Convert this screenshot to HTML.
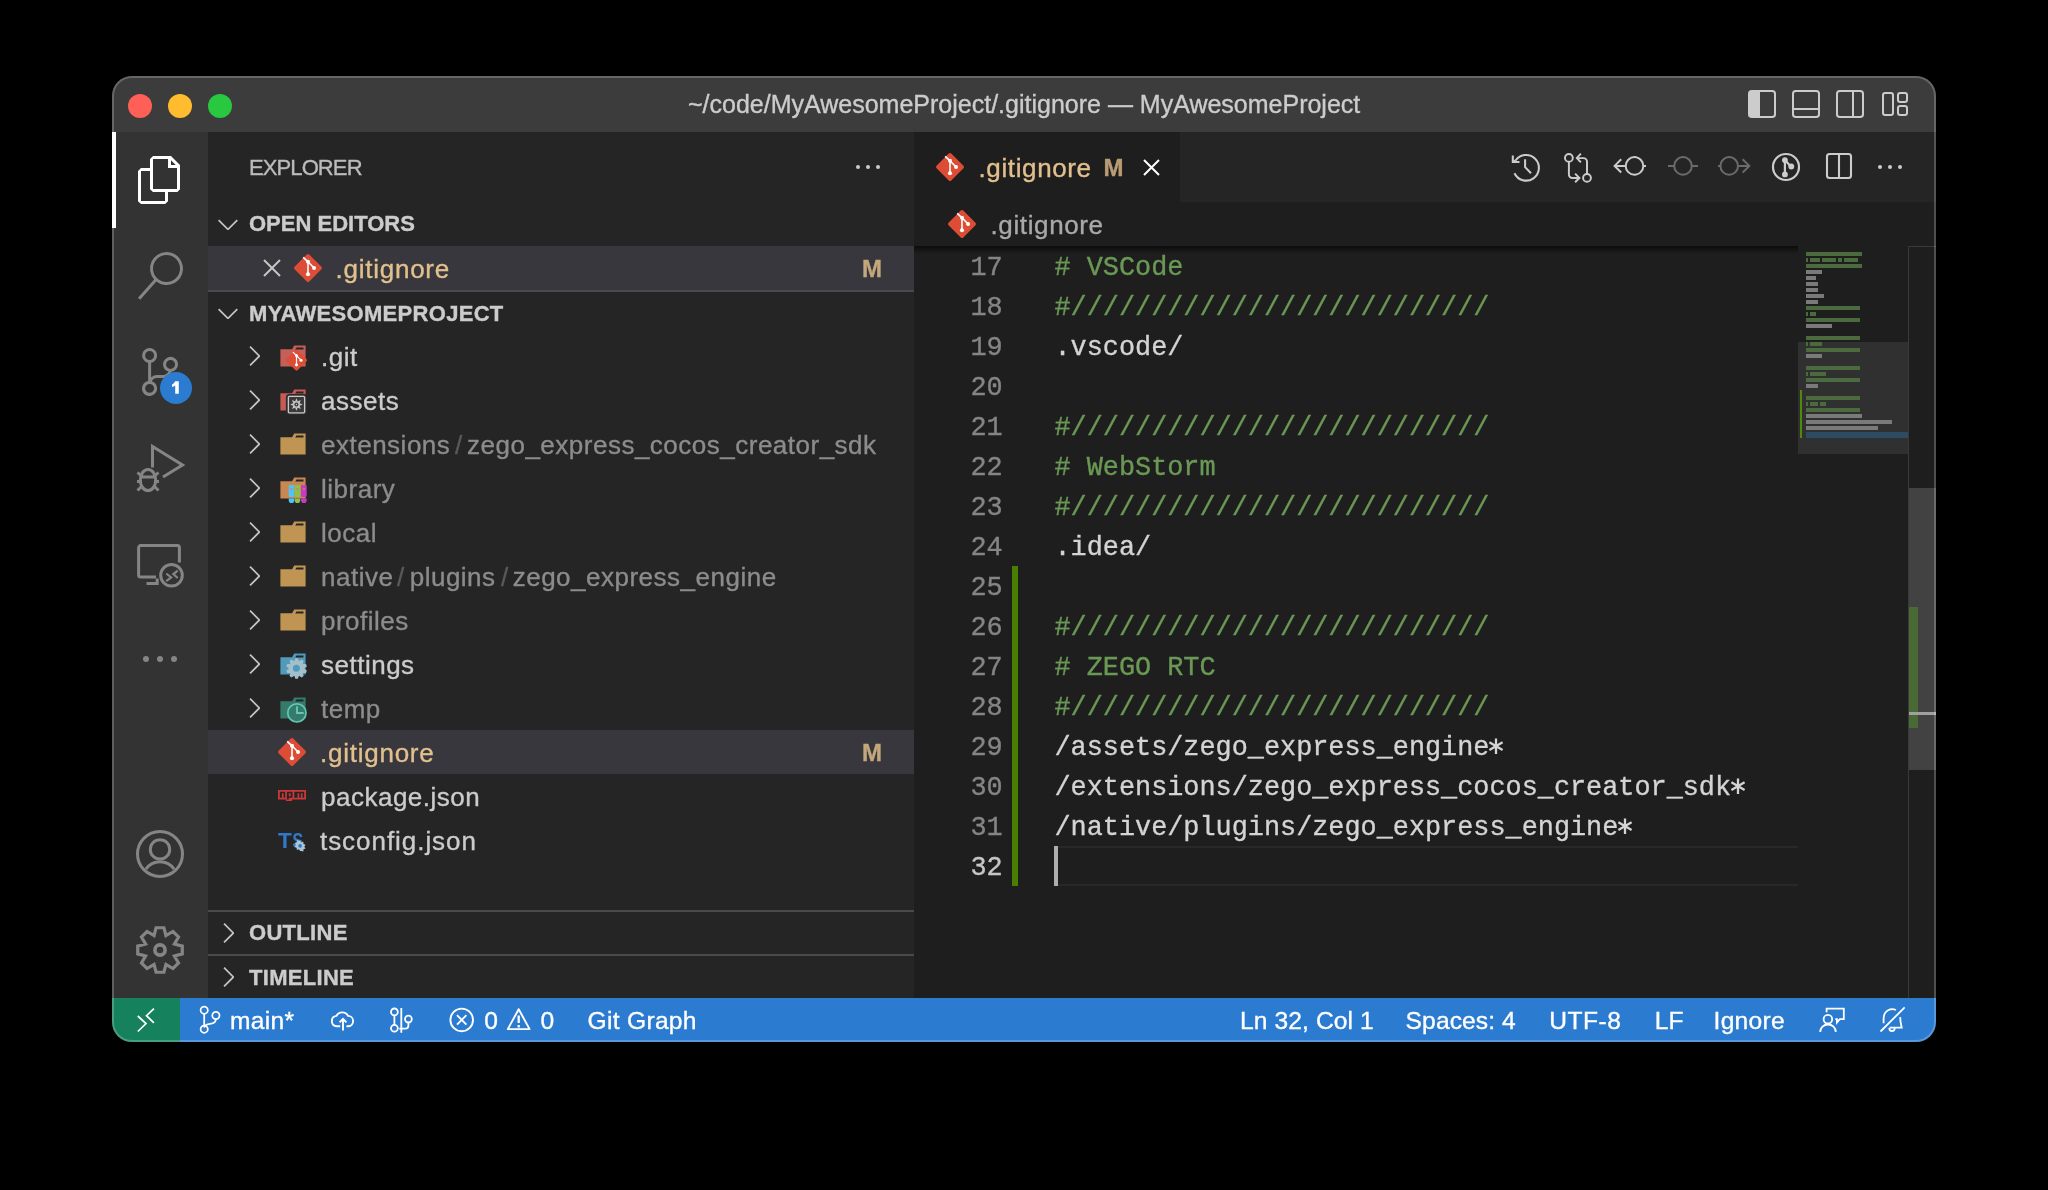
<!DOCTYPE html>
<html><head><meta charset="utf-8">
<style>
*{margin:0;padding:0;box-sizing:border-box}
html,body{width:2048px;height:1190px;background:#000;overflow:hidden;font-family:"Liberation Sans",sans-serif}
#win{position:absolute;left:0;top:0;width:2048px;height:1190px;clip-path:inset(76px 112px 148px 112px round 20px);will-change:transform}
.a{position:absolute}
.t{position:absolute;white-space:pre;line-height:1;-webkit-text-stroke:0.35px currentColor}
.mono{font-family:"Liberation Mono",monospace}
svg{position:absolute;overflow:visible}
</style></head><body>
<div id="win">
<div class="a" style="left:112px;top:76px;width:1824px;height:56px;background:#3c3c3c;"></div>
<div class="a" style="left:112px;top:132px;width:96px;height:866px;background:#333333;"></div>
<div class="a" style="left:208px;top:132px;width:706px;height:866px;background:#252526;"></div>
<div class="a" style="left:914px;top:132px;width:1022px;height:866px;background:#1e1e1e;"></div>
<div class="a" style="left:1180px;top:132px;width:756px;height:70px;background:#252526;"></div>
<div class="a" style="left:112px;top:998px;width:1824px;height:44px;background:#2b7bd1;"></div>
<div class="a" style="left:112px;top:998px;width:68px;height:44px;background:#16825d;"></div>
<div class="a" style="left:128px;top:94px;width:24px;height:24px;border-radius:50%;background:#fe5f57"></div>
<div class="a" style="left:168px;top:94px;width:24px;height:24px;border-radius:50%;background:#febc2e"></div>
<div class="a" style="left:208px;top:94px;width:24px;height:24px;border-radius:50%;background:#28c840"></div>
<div class="t" style="left:688px;top:92.34px;font-size:25px;color:#cccccc;">~/code/MyAwesomeProject/.gitignore — MyAwesomeProject</div>
<svg style="left:1748px;top:90px;" width="28" height="28" viewBox="0 0 28 28"><rect x="1" y="1" width="26" height="26" rx="2.8" fill="none" stroke="#cccccc" stroke-width="2"/><path d="M3.8 1h8.2v26H3.8a2.8 2.8 0 0 1-2.8-2.8V3.8A2.8 2.8 0 0 1 3.8 1z" fill="#cccccc"/></svg>
<svg style="left:1792px;top:90px;" width="28" height="28" viewBox="0 0 28 28"><rect x="1" y="1" width="26" height="26" rx="2.8" fill="none" stroke="#cccccc" stroke-width="2"/><path d="M1 19h26" stroke="#cccccc" stroke-width="2"/></svg>
<svg style="left:1836px;top:90px;" width="28" height="28" viewBox="0 0 28 28"><rect x="1" y="1" width="26" height="26" rx="2.8" fill="none" stroke="#cccccc" stroke-width="2"/><path d="M17 1v26" stroke="#cccccc" stroke-width="2"/></svg>
<svg style="left:1882px;top:92px;" width="26" height="24" viewBox="0 0 26 24"><rect x="1" y="1" width="10" height="22" rx="2.2" fill="none" stroke="#cccccc" stroke-width="2"/><rect x="16" y="1" width="9" height="9" rx="2.2" fill="none" stroke="#cccccc" stroke-width="2"/><rect x="16" y="14" width="9" height="9" rx="2.2" fill="none" stroke="#cccccc" stroke-width="2"/></svg>
<div class="a" style="left:112px;top:132px;width:4px;height:96px;background:#ffffff;"></div>
<svg style="left:136px;top:156px;" width="48" height="48" viewBox="0 0 24 24"><path fill="#ffffff" fill-rule="evenodd" d="M17.5 0h-9L7 1.5V6H2.5L1 7.5v15.07L2.5 24h12.07L16 22.57V18h4.7l1.3-1.43V4.5L17.5 0zm0 2.12l2.38 2.38H17.5V2.12zm-3 20.38h-12v-15H7v9.07L8.5 18h6v4.5zm6-6h-12v-15H16V6h4.5v10.5z"/></svg>
<svg style="left:136px;top:252px;" width="48" height="48" viewBox="0 0 24 24"><path fill="#858585" d="M15.25 0a8.25 8.25 0 0 0-6.18 13.72L1 22.88l1.12 1l8.05-9.12A8.25 8.25 0 1 0 15.25.01V0zm0 15a6.75 6.75 0 1 1 0-13.5 6.75 6.75 0 0 1 0 13.5z"/></svg>
<svg style="left:136px;top:348px;" width="48" height="48" viewBox="0 0 24 24"><path fill="#858585" d="M21.007 8.222A3.738 3.738 0 0 0 15.045 5.2a3.737 3.737 0 0 0 1.156 6.583 2.988 2.988 0 0 1-2.668 1.67h-2.99a4.456 4.456 0 0 0-2.989 1.165V7.4a3.737 3.737 0 1 0-1.494 0v9.117a3.776 3.776 0 1 0 1.816.099 2.99 2.99 0 0 1 2.668-1.667h2.99a4.484 4.484 0 0 0 4.223-3.039 3.736 3.736 0 0 0 3.25-3.687zM4.565 3.738a2.242 2.242 0 1 1 4.484 0 2.242 2.242 0 0 1-4.484 0zm4.484 16.441a2.242 2.242 0 1 1-4.484 0 2.242 2.242 0 0 1 4.484 0zm8.221-9.715a2.242 2.242 0 1 1 0-4.485 2.242 2.242 0 0 1 0 4.485z"/></svg>
<div class="a" style="left:159.7px;top:372px;width:32px;height:32px;border-radius:50%;background:#2b7bd1"></div>
<svg style="left:168px;top:378px;" width="16" height="18" viewBox="0 0 16 18"><path fill="#ffffff" d="M7.2 3.2h3.6v12.6H7.2V7.4c-.9.8-2.1 1.4-3.2 1.7V6.6C5.2 6 6.5 4.6 7.2 3.2z"/></svg>
<svg style="left:136px;top:444px;" width="48" height="48" viewBox="0 0 48 48"><g fill="none" stroke="#858585" stroke-width="3"><path d="M16.5 23.5V2.5l30 18.5-19.5 12"/><ellipse cx="12" cy="36" rx="7.7" ry="10.6"/><path d="M5 33h14M1.5 28.5l4.5 4M22.5 28.5l-4.5 4M1 37.5h5M18 37.5h5M1.5 46.5l5-5M22.5 46.5l-5-5"/></g></svg>
<svg style="left:136px;top:540px;" width="48" height="48" viewBox="0 0 48 48"><g fill="none" stroke="#858585" stroke-width="3"><path d="M43.4 22.6V7.6a2 2 0 0 0-2-2H4.6a2 2 0 0 0-2 2v27.4a2 2 0 0 0 2 2h15.4"/><path d="M10.5 43.5H21.2V38.5"/><circle cx="35.5" cy="35.3" r="10.8"/></g><path d="M30.2 33.5l5 3.9-5 3.8M41.7 30.6l-4.4 3.5 4.4 3.9" fill="none" stroke="#858585" stroke-width="2.2"/></svg>
<div class="a" style="left:142.5px;top:655.7px;width:6px;height:6px;border-radius:50%;background:#858585"></div>
<div class="a" style="left:156.8px;top:655.7px;width:6px;height:6px;border-radius:50%;background:#858585"></div>
<div class="a" style="left:171.2px;top:655.7px;width:6px;height:6px;border-radius:50%;background:#858585"></div>
<svg style="left:136px;top:830px;" width="48" height="48" viewBox="0 0 48 48"><g fill="none" stroke="#858585" stroke-width="3"><circle cx="24" cy="24" r="22.5"/><circle cx="24" cy="19.4" r="9.7"/><path d="M9.9 39.2A17.1 17.1 0 0 1 38.1 39.2"/></g></svg>
<svg style="left:136px;top:926px;" width="48" height="48" viewBox="0 0 48 48"><path fill="none" stroke="#858585" stroke-width="3.2" stroke-linejoin="miter" d="M20.08 1.74 L27.92 1.74 L29.97 9.59 L36.96 5.49 L42.51 11.04 L38.41 18.03 L46.26 20.08 L46.26 27.92 L38.41 29.97 L42.51 36.96 L36.96 42.51 L29.97 38.41 L27.92 46.26 L20.08 46.26 L18.03 38.41 L11.04 42.51 L5.49 36.96 L9.59 29.97 L1.74 27.92 L1.74 20.08 L9.59 18.03 L5.49 11.04 L11.04 5.49 L18.03 9.59Z"/><circle cx="24" cy="24" r="5.1" fill="none" stroke="#858585" stroke-width="3.6"/></svg>
<div class="t" style="left:249px;top:156.68px;font-size:22px;color:#bbbbbb;letter-spacing:-0.9px;">EXPLORER</div>
<div class="a" style="left:855.5px;top:164.5px;width:4.8px;height:4.8px;border-radius:50%;background:#cccccc"></div>
<div class="a" style="left:865.5px;top:164.5px;width:4.8px;height:4.8px;border-radius:50%;background:#cccccc"></div>
<div class="a" style="left:875.6px;top:164.5px;width:4.8px;height:4.8px;border-radius:50%;background:#cccccc"></div>
<svg style="left:212px;top:208px;" width="32" height="32" viewBox="0 0 16 16"><path fill="#c5c5c5" d="M7.976 10.072l4.357-4.357.62.618L8.284 11h-.618L3 6.333l.619-.618 4.357 4.357z"/></svg>
<div class="t" style="left:249px;top:213.38px;font-size:22px;color:#cccccc;font-weight:700;">OPEN EDITORS</div>
<div class="a" style="left:208px;top:246px;width:706px;height:44px;background:#37373d;"></div>
<svg style="left:263px;top:259px;" width="18" height="18" viewBox="0 0 18 18"><path d="M1 1l16 16M17 1L1 17" stroke="#c5c5c5" stroke-width="2" fill="none"/></svg>
<svg style="left:292px;top:252px;" width="32" height="32" viewBox="0 0 32 32"><path fill="#dd4c35" d="M29.472 14.753L17.247 2.528a1.8 1.8 0 0 0-2.55 0L2.528 14.697a1.8 1.8 0 0 0 0 2.551l12.225 12.224a1.8 1.8 0 0 0 2.55 0l12.169-12.17a1.8 1.8 0 0 0 0-2.549"/><path fill="none" stroke="#fff" stroke-width="1.6" d="M11.2 5.3l4.8 4.5v12.4M16 9.8l6.05 6.2"/><circle cx="16" cy="9.8" r="2" fill="#fff"/><circle cx="22.05" cy="16" r="2" fill="#fff"/><circle cx="16" cy="22.2" r="2.05" fill="#fff"/></svg>
<div class="t" style="left:335.5px;top:255.99px;font-size:26px;color:#e2c08d;letter-spacing:0.75px;">.gitignore</div>
<div class="t" style="left:862px;top:256.88px;font-size:24px;color:#c4a77c;font-weight:700;letter-spacing:-1.5px;">M</div>
<div class="a" style="left:208px;top:290px;width:706px;height:2px;background:#4a4a4b;"></div>
<svg style="left:212px;top:297px;" width="32" height="32" viewBox="0 0 16 16"><path fill="#c5c5c5" d="M7.976 10.072l4.357-4.357.62.618L8.284 11h-.618L3 6.333l.619-.618 4.357 4.357z"/></svg>
<div class="t" style="left:249px;top:302.58px;font-size:22px;color:#cccccc;font-weight:700;letter-spacing:0.3px;">MYAWESOMEPROJECT</div>
<svg style="left:238px;top:340px;" width="32" height="32" viewBox="0 0 16 16"><path fill="#c5c5c5" d="M10.072 8.024L5.715 3.667l.618-.62L11 7.716v.618L6.333 13l-.618-.619 4.357-4.357z"/></svg>
<svg style="left:276px;top:340px;" width="32" height="32" viewBox="0 0 32 32"><path fill="#c55f58" d="M27.5 5.5h-9.3l-2.1 3.8H4.4v17.2h25.2V5.5zm0 4.1h-8.2l1.1-2.1h7.1z"/><g transform="translate(8.5 8.2) scale(0.75)"><path fill="#dd4c35" d="M29.472 14.753L17.247 2.528a1.8 1.8 0 0 0-2.55 0L2.528 14.697a1.8 1.8 0 0 0 0 2.551l12.225 12.224a1.8 1.8 0 0 0 2.55 0l12.169-12.17a1.8 1.8 0 0 0 0-2.549"/><path fill="none" stroke="#fff" stroke-width="1.6" d="M11.2 5.3l4.8 4.5v12.4M16 9.8l6.05 6.2"/><circle cx="16" cy="9.8" r="2" fill="#fff"/><circle cx="22.05" cy="16" r="2" fill="#fff"/><circle cx="16" cy="22.2" r="2.05" fill="#fff"/></g></svg>
<div class="t" style="left:321px;top:344.39px;font-size:26px;color:#cccccc;letter-spacing:0.5px;">.git</div>
<svg style="left:238px;top:384px;" width="32" height="32" viewBox="0 0 16 16"><path fill="#c5c5c5" d="M10.072 8.024L5.715 3.667l.618-.62L11 7.716v.618L6.333 13l-.618-.619 4.357-4.357z"/></svg>
<svg style="left:276px;top:384px;" width="32" height="32" viewBox="0 0 32 32"><path fill="#c55a56" d="M27.5 5.5h-9.3l-2.1 3.8H4.4v17.2h25.2V5.5zm0 4.1h-8.2l1.1-2.1h7.1z"/><rect x="10.4" y="10.5" width="20.2" height="20.1" rx="2.5" fill="#3a3a3a" stroke="#2a2a2a" stroke-width="1"/><rect x="12.4" y="12.4" width="16.2" height="16.4" rx="1" fill="none" stroke="#c8c8c8" stroke-width="1.3"/><path fill="#c8c8c8" d="M20.40 14.30L19.01 17.62L21.79 17.62ZM24.78 16.12L21.45 17.48L23.42 19.45ZM26.60 20.50L23.28 19.11L23.28 21.89ZM24.78 24.88L23.42 21.55L21.45 23.52ZM20.40 26.70L21.79 23.38L19.01 23.38ZM16.02 24.88L19.35 23.52L17.38 21.55ZM14.20 20.50L17.52 21.89L17.52 19.11ZM16.02 16.12L17.38 19.45L19.35 17.48Z"/><circle cx="20.4" cy="20.5" r="3.3" fill="#c8c8c8"/><circle cx="20.4" cy="20.5" r="2" fill="#3a3a3a"/><circle cx="20.4" cy="20.5" r="0.7" fill="#c8c8c8"/></svg>
<div class="t" style="left:321px;top:388.39px;font-size:26px;color:#cccccc;letter-spacing:0.5px;">assets</div>
<svg style="left:238px;top:428px;" width="32" height="32" viewBox="0 0 16 16"><path fill="#c5c5c5" d="M10.072 8.024L5.715 3.667l.618-.62L11 7.716v.618L6.333 13l-.618-.619 4.357-4.357z"/></svg>
<svg style="left:276px;top:428px;" width="32" height="32" viewBox="0 0 32 32"><path fill="#c09553" d="M27.5 5.5h-9.3l-2.1 3.8H4.4v17.2h25.2V5.5zm0 4.1h-8.2l1.1-2.1h7.1z"/></svg>
<div class="t" style="left:321px;top:432.39px;font-size:26px;color:#8c8c8c;letter-spacing:0.5px;">extensions</div>
<div class="t" style="left:455px;top:432.39px;font-size:26px;color:#5a5a5a;">/</div>
<div class="t" style="left:467px;top:432.39px;font-size:26px;color:#8c8c8c;letter-spacing:0.5px;">zego_express_cocos_creator_sdk</div>
<svg style="left:238px;top:472px;" width="32" height="32" viewBox="0 0 16 16"><path fill="#c5c5c5" d="M10.072 8.024L5.715 3.667l.618-.62L11 7.716v.618L6.333 13l-.618-.619 4.357-4.357z"/></svg>
<svg style="left:276px;top:472px;" width="32" height="32" viewBox="0 0 32 32"><path fill="#c98752" d="M27.5 5.5h-9.3l-2.1 3.8H4.4v17.2h25.2V5.5zm0 4.1h-8.2l1.1-2.1h7.1z"/><path fill="#4fc3f7" d="M12.7 13.6l.8-.6h1.2l.8.6l.8-.6h1.2l.8.6v10.6l-.9 .7h-3.8l-.9-.7z"/><path fill="#4fc3f7" d="M12.7 26.4h5.6v2.6l-1.2 2h-3.2l-1.2-2z"/><rect x="14.4" y="16.2" width="2.2" height="1.6" fill="#c98752"/><path fill="#8bc34a" d="M18.65 13.6l.8-.6h1.2l.8.6l.8-.6h1.2l.8.6v10.6l-.9 .7h-3.8l-.9-.7z"/><path fill="#8bc34a" d="M18.65 26.4h5.6v2.6l-1.2 2h-3.2l-1.2-2z"/><rect x="20.349999999999998" y="16.2" width="2.2" height="1.6" fill="#c98752"/><path fill="#c63ac6" d="M25.05 13.6l.8-.6h1.2l.8.6l.8-.6h1.2l.8.6v10.6l-.9 .7h-3.8l-.9-.7z"/><path fill="#c63ac6" d="M25.05 26.4h5.6v2.6l-1.2 2h-3.2l-1.2-2z"/><rect x="26.75" y="16.2" width="2.2" height="1.6" fill="#c98752"/></svg>
<div class="t" style="left:321px;top:476.39px;font-size:26px;color:#8c8c8c;letter-spacing:0.5px;">library</div>
<svg style="left:238px;top:516px;" width="32" height="32" viewBox="0 0 16 16"><path fill="#c5c5c5" d="M10.072 8.024L5.715 3.667l.618-.62L11 7.716v.618L6.333 13l-.618-.619 4.357-4.357z"/></svg>
<svg style="left:276px;top:516px;" width="32" height="32" viewBox="0 0 32 32"><path fill="#c09553" d="M27.5 5.5h-9.3l-2.1 3.8H4.4v17.2h25.2V5.5zm0 4.1h-8.2l1.1-2.1h7.1z"/></svg>
<div class="t" style="left:321px;top:520.39px;font-size:26px;color:#8c8c8c;letter-spacing:0.5px;">local</div>
<svg style="left:238px;top:560px;" width="32" height="32" viewBox="0 0 16 16"><path fill="#c5c5c5" d="M10.072 8.024L5.715 3.667l.618-.62L11 7.716v.618L6.333 13l-.618-.619 4.357-4.357z"/></svg>
<svg style="left:276px;top:560px;" width="32" height="32" viewBox="0 0 32 32"><path fill="#c09553" d="M27.5 5.5h-9.3l-2.1 3.8H4.4v17.2h25.2V5.5zm0 4.1h-8.2l1.1-2.1h7.1z"/></svg>
<div class="t" style="left:321px;top:564.39px;font-size:26px;color:#8c8c8c;letter-spacing:0.5px;">native</div>
<div class="t" style="left:397px;top:564.39px;font-size:26px;color:#5a5a5a;">/</div>
<div class="t" style="left:409.7px;top:564.39px;font-size:26px;color:#8c8c8c;letter-spacing:0.5px;">plugins</div>
<div class="t" style="left:501px;top:564.39px;font-size:26px;color:#5a5a5a;">/</div>
<div class="t" style="left:512.7px;top:564.39px;font-size:26px;color:#8c8c8c;letter-spacing:0.5px;">zego_express_engine</div>
<svg style="left:238px;top:604px;" width="32" height="32" viewBox="0 0 16 16"><path fill="#c5c5c5" d="M10.072 8.024L5.715 3.667l.618-.62L11 7.716v.618L6.333 13l-.618-.619 4.357-4.357z"/></svg>
<svg style="left:276px;top:604px;" width="32" height="32" viewBox="0 0 32 32"><path fill="#c09553" d="M27.5 5.5h-9.3l-2.1 3.8H4.4v17.2h25.2V5.5zm0 4.1h-8.2l1.1-2.1h7.1z"/></svg>
<div class="t" style="left:321px;top:608.39px;font-size:26px;color:#8c8c8c;letter-spacing:0.5px;">profiles</div>
<svg style="left:238px;top:648px;" width="32" height="32" viewBox="0 0 16 16"><path fill="#c5c5c5" d="M10.072 8.024L5.715 3.667l.618-.62L11 7.716v.618L6.333 13l-.618-.619 4.357-4.357z"/></svg>
<svg style="left:276px;top:648px;" width="32" height="32" viewBox="0 0 32 32"><path fill="#519aba" d="M27.5 5.5h-9.3l-2.1 3.8H4.4v17.2h25.2V5.5zm0 4.1h-8.2l1.1-2.1h7.1z"/><path fill="#a3bfcc" d="M19.33 10.18L21.87 10.18L22.95 13.27L22.95 13.27L25.64 11.40L27.69 12.89L26.75 16.03L26.75 16.03L30.03 16.10L30.81 18.52L28.20 20.50L28.20 20.50L30.81 22.48L30.03 24.90L26.75 24.97L26.75 24.97L27.69 28.11L25.64 29.60L22.95 27.73L22.95 27.73L21.87 30.82L19.33 30.82L18.25 27.73L18.25 27.73L15.56 29.60L13.51 28.11L14.45 24.97L14.45 24.97L11.17 24.90L10.39 22.48L13.00 20.50L13.00 20.50L10.39 18.52L11.17 16.10L14.45 16.03L14.45 16.03L13.51 12.89L15.56 11.40L18.25 13.27L18.25 13.27Z"/><circle cx="20.4" cy="20.3" r="3.5" fill="#519aba"/></svg>
<div class="t" style="left:321px;top:652.39px;font-size:26px;color:#cccccc;letter-spacing:0.5px;">settings</div>
<svg style="left:238px;top:692px;" width="32" height="32" viewBox="0 0 16 16"><path fill="#c5c5c5" d="M10.072 8.024L5.715 3.667l.618-.62L11 7.716v.618L6.333 13l-.618-.619 4.357-4.357z"/></svg>
<svg style="left:276px;top:692px;" width="32" height="32" viewBox="0 0 32 32"><path fill="#377a6c" d="M27.5 5.5h-9.3l-2.1 3.8H4.4v17.2h25.2V5.5zm0 4.1h-8.2l1.1-2.1h7.1z"/><circle cx="20.9" cy="20.9" r="9.1" fill="#377a6c" stroke="#5fc9b5" stroke-width="1.7"/><path d="M21 14.2v6.8h6.7" fill="none" stroke="#5fc9b5" stroke-width="1.9"/></svg>
<div class="t" style="left:321px;top:696.39px;font-size:26px;color:#8c8c8c;letter-spacing:0.5px;">temp</div>
<div class="a" style="left:208px;top:730px;width:706px;height:44px;background:#37373d;"></div>
<div class="t" style="left:862px;top:740.88px;font-size:24px;color:#c4a77c;font-weight:700;letter-spacing:-1.5px;">M</div>
<svg style="left:276px;top:736px;" width="32" height="32" viewBox="0 0 32 32"><path fill="#dd4c35" d="M29.472 14.753L17.247 2.528a1.8 1.8 0 0 0-2.55 0L2.528 14.697a1.8 1.8 0 0 0 0 2.551l12.225 12.224a1.8 1.8 0 0 0 2.55 0l12.169-12.17a1.8 1.8 0 0 0 0-2.549"/><path fill="none" stroke="#fff" stroke-width="1.6" d="M11.2 5.3l4.8 4.5v12.4M16 9.8l6.05 6.2"/><circle cx="16" cy="9.8" r="2" fill="#fff"/><circle cx="22.05" cy="16" r="2" fill="#fff"/><circle cx="16" cy="22.2" r="2.05" fill="#fff"/></svg>
<div class="t" style="left:320px;top:740.39px;font-size:26px;color:#e2c08d;letter-spacing:0.75px;">.gitignore</div>
<svg style="left:276px;top:780px;" width="32" height="32" viewBox="0 0 32 32"><path fill="#cb3837" d="M2 10h28v9.5H16v1.6h-6v-1.6H2z"/><path fill="#252526" d="M3.8 11.7h5.4v6.1h-1.6v-4.5H5.9v4.5H3.8zM10.9 11.7h5.6v6.1h-3.7v1.6h-1.9zM12.8 13.3v2.9h1.9v-2.9zM18.3 11.7h9.9v6.1h-1.7v-4.5h-1.6v4.5h-1.7v-4.5h-1.6v4.5h-3.3z"/></svg>
<div class="t" style="left:321px;top:784.39px;font-size:26px;color:#cccccc;letter-spacing:0.5px;">package.json</div>
<svg style="left:276px;top:824px;" width="32" height="32" viewBox="0 0 32 32"><text x="2.1" y="24.3" font-family="Liberation Sans" font-weight="700" font-size="22.6" fill="#3178c6">T</text><text transform="translate(16.2 24.3) scale(0.74 1)" font-family="Liberation Sans" font-weight="700" font-size="22.6" fill="#3178c6">S</text><g transform="translate(24.1 21.8) scale(0.85)"><path fill="#a9c5d6" d="M0-6.2l1.3 2.2 2.5-.8.2 2.6 2.4 1-1.4 2.2 1.4 2.2-2.4 1-.2 2.6-2.5-.8L0 6.2-1.3 4-3.8 4.8-4 2.2-6.4 1.2-5 -1l-1.4-2.2 2.4-1 .2-2.6 2.5.8z"/><circle r="2.2" fill="#3178c6"/></g></svg>
<div class="t" style="left:320px;top:828.39px;font-size:26px;color:#cccccc;letter-spacing:0.95px;">tsconfig.json</div>
<div class="a" style="left:208px;top:910px;width:706px;height:2px;background:#4a4a4b;"></div>
<svg style="left:212px;top:917px;" width="32" height="32" viewBox="0 0 16 16"><path fill="#c5c5c5" d="M10.072 8.024L5.715 3.667l.618-.62L11 7.716v.618L6.333 13l-.618-.619 4.357-4.357z"/></svg>
<div class="t" style="left:249px;top:922.38px;font-size:22px;color:#cccccc;font-weight:700;letter-spacing:0.3px;">OUTLINE</div>
<div class="a" style="left:208px;top:954px;width:706px;height:2px;background:#4a4a4b;"></div>
<svg style="left:212px;top:961px;" width="32" height="32" viewBox="0 0 16 16"><path fill="#c5c5c5" d="M10.072 8.024L5.715 3.667l.618-.62L11 7.716v.618L6.333 13l-.618-.619 4.357-4.357z"/></svg>
<div class="t" style="left:249px;top:966.68px;font-size:22px;color:#cccccc;font-weight:700;letter-spacing:0.3px;">TIMELINE</div>
<svg style="left:934px;top:151px;" width="32" height="32" viewBox="0 0 32 32"><path fill="#dd4c35" d="M29.472 14.753L17.247 2.528a1.8 1.8 0 0 0-2.55 0L2.528 14.697a1.8 1.8 0 0 0 0 2.551l12.225 12.224a1.8 1.8 0 0 0 2.55 0l12.169-12.17a1.8 1.8 0 0 0 0-2.549"/><path fill="none" stroke="#fff" stroke-width="1.6" d="M11.2 5.3l4.8 4.5v12.4M16 9.8l6.05 6.2"/><circle cx="16" cy="9.8" r="2" fill="#fff"/><circle cx="22.05" cy="16" r="2" fill="#fff"/><circle cx="16" cy="22.2" r="2.05" fill="#fff"/></svg>
<div class="t" style="left:978.5px;top:154.99px;font-size:26px;color:#e2c08d;letter-spacing:0.62px;">.gitignore</div>
<div class="t" style="left:1103.5px;top:156.18px;font-size:24px;color:#b89c74;font-weight:700;letter-spacing:-1.5px;">M</div>
<svg style="left:1143px;top:158.7px;" width="17" height="17" viewBox="0 0 17 17"><path d="M1 1l15 15M16 1L1 16" stroke="#ffffff" stroke-width="2" fill="none"/></svg>
<svg style="left:1508px;top:149px;" width="36" height="36" viewBox="0 0 36 36"><g fill="none" stroke="#cccccc" stroke-width="2.05"><path d="M7.6 11.5A12.8 12.8 0 1 1 6.5 24.2"/><path d="M4.8 6.4V13h6.7M4.8 13l2.9-1.6"/><path d="M17.1 10.3v7.8l5.9 6.1"/></g></svg>
<svg style="left:1560px;top:149px;" width="36" height="36" viewBox="0 0 36 36"><g fill="none" stroke="#cccccc" stroke-width="1.95"><circle cx="8.9" cy="8.9" r="3.9"/><path d="M8.9 12.8v12.7a3.5 3.5 0 0 0 3.5 3.5h6.8"/><path d="M15.1 24.6l4.3 4.4-4.3 4.3"/><circle cx="27" cy="28.9" r="3.9"/><path d="M27 25V12.6a3.5 3.5 0 0 0-3.5-3.5h-6.5"/><path d="M20.9 4.6l-4.1 4.3 4.1 4.4"/></g></svg>
<svg style="left:1610px;top:149px;" width="40" height="36" viewBox="0 0 40 36"><g fill="none" stroke="#cccccc" stroke-width="2"><circle cx="24.5" cy="16.9" r="8.8"/><path d="M4.4 16.9h11.3M11.2 10.3l-6.6 6.6 6.6 6.6M33.3 16.9h2.7"/></g></svg>
<svg style="left:1660px;top:149px;" width="40" height="36" viewBox="0 0 40 36"><g fill="none" stroke="#6b6b6b" stroke-width="2"><circle cx="23" cy="16.9" r="8.8"/><path d="M8 16.9h6.2M31.8 16.9h6.2"/></g></svg>
<svg style="left:1710px;top:149px;" width="40" height="36" viewBox="0 0 40 36"><g fill="none" stroke="#6b6b6b" stroke-width="2"><circle cx="19.2" cy="16.9" r="8.8"/><path d="M8 16.9h2.4M28 16.9h11.2M32.6 10.2l6.7 6.7-6.7 6.7"/></g></svg>
<svg style="left:1770px;top:151px;" width="32" height="32" viewBox="0 0 32 32"><g fill="none" stroke="#cccccc" stroke-width="2.2"><circle cx="16" cy="16" r="13"/><path d="M14.9 9.1v15.2M14.9 9.1l6.4 7"/></g><g fill="#cccccc"><circle cx="14.9" cy="9.1" r="2.9"/><circle cx="21.3" cy="15.5" r="2.9"/><circle cx="14.9" cy="23.4" r="2.9"/></g></svg>
<svg style="left:1826px;top:153px;" width="26" height="26" viewBox="0 0 26 26"><rect x="1" y="1" width="24" height="24" rx="2.5" fill="none" stroke="#cccccc" stroke-width="2.1"/><path d="M13 1v24" stroke="#cccccc" stroke-width="2.1"/></svg>
<div class="a" style="left:1877.8px;top:164.70000000000002px;width:4.4px;height:4.4px;border-radius:50%;background:#cccccc"></div>
<div class="a" style="left:1887.8px;top:164.70000000000002px;width:4.4px;height:4.4px;border-radius:50%;background:#cccccc"></div>
<div class="a" style="left:1897.8px;top:164.70000000000002px;width:4.4px;height:4.4px;border-radius:50%;background:#cccccc"></div>
<svg style="left:948px;top:210px;" width="28" height="28" viewBox="2 2 28 28"><path fill="#dd4c35" d="M29.472 14.753L17.247 2.528a1.8 1.8 0 0 0-2.55 0L2.528 14.697a1.8 1.8 0 0 0 0 2.551l12.225 12.224a1.8 1.8 0 0 0 2.55 0l12.169-12.17a1.8 1.8 0 0 0 0-2.549"/><path fill="none" stroke="#fff" stroke-width="1.6" d="M11.2 5.3l4.8 4.5v12.4M16 9.8l6.05 6.2"/><circle cx="16" cy="9.8" r="2" fill="#fff"/><circle cx="22.05" cy="16" r="2" fill="#fff"/><circle cx="16" cy="22.2" r="2.05" fill="#fff"/></svg>
<div class="t" style="left:990.5px;top:211.99px;font-size:26px;color:#a9a9a9;letter-spacing:0.62px;">.gitignore</div>
<div class="a" style="left:1054px;top:846px;width:744px;height:40px;border:2px solid #282828;border-right:none"></div>
<div class="t mono" style="left:970.5px;top:254.62px;font-size:26.85px;color:#858585;">17</div>
<div class="t mono" style="left:1054.5px;top:254.62px;font-size:26.85px;color:#6a9955;"># VSCode</div>
<div class="t mono" style="left:970.5px;top:294.62px;font-size:26.85px;color:#858585;">18</div>
<div class="t mono" style="left:1054.5px;top:294.62px;font-size:26.85px;color:#6a9955;">#//////////////////////////</div>
<div class="t mono" style="left:970.5px;top:334.62px;font-size:26.85px;color:#858585;">19</div>
<div class="t mono" style="left:1054.5px;top:334.62px;font-size:26.85px;color:#d4d4d4;">.vscode/</div>
<div class="t mono" style="left:970.5px;top:374.62px;font-size:26.85px;color:#858585;">20</div>
<div class="t mono" style="left:970.5px;top:414.62px;font-size:26.85px;color:#858585;">21</div>
<div class="t mono" style="left:1054.5px;top:414.62px;font-size:26.85px;color:#6a9955;">#//////////////////////////</div>
<div class="t mono" style="left:970.5px;top:454.62px;font-size:26.85px;color:#858585;">22</div>
<div class="t mono" style="left:1054.5px;top:454.62px;font-size:26.85px;color:#6a9955;"># WebStorm</div>
<div class="t mono" style="left:970.5px;top:494.62px;font-size:26.85px;color:#858585;">23</div>
<div class="t mono" style="left:1054.5px;top:494.62px;font-size:26.85px;color:#6a9955;">#//////////////////////////</div>
<div class="t mono" style="left:970.5px;top:534.62px;font-size:26.85px;color:#858585;">24</div>
<div class="t mono" style="left:1054.5px;top:534.62px;font-size:26.85px;color:#d4d4d4;">.idea/</div>
<div class="t mono" style="left:970.5px;top:574.62px;font-size:26.85px;color:#858585;">25</div>
<div class="t mono" style="left:970.5px;top:614.62px;font-size:26.85px;color:#858585;">26</div>
<div class="t mono" style="left:1054.5px;top:614.62px;font-size:26.85px;color:#6a9955;">#//////////////////////////</div>
<div class="t mono" style="left:970.5px;top:654.62px;font-size:26.85px;color:#858585;">27</div>
<div class="t mono" style="left:1054.5px;top:654.62px;font-size:26.85px;color:#6a9955;"># ZEGO RTC</div>
<div class="t mono" style="left:970.5px;top:694.62px;font-size:26.85px;color:#858585;">28</div>
<div class="t mono" style="left:1054.5px;top:694.62px;font-size:26.85px;color:#6a9955;">#//////////////////////////</div>
<div class="t mono" style="left:970.5px;top:734.62px;font-size:26.85px;color:#858585;">29</div>
<div class="t mono" style="left:1054.5px;top:734.62px;font-size:26.85px;color:#d4d4d4;">/assets/zego_express_engine</div>
<svg style="left:1486.47px;top:736.4px;" width="20" height="20" viewBox="0 0 20 20"><g stroke="#d4d4d4" stroke-width="2.3"><path d="M10 2.4v15.6M3.4 6.3l13.2 7.6M3.4 13.9l13.2-7.6"/></g></svg>
<div class="t mono" style="left:970.5px;top:774.62px;font-size:26.85px;color:#858585;">30</div>
<div class="t mono" style="left:1054.5px;top:774.62px;font-size:26.85px;color:#d4d4d4;">/extensions/zego_express_cocos_creator_sdk</div>
<svg style="left:1728.12px;top:776.4px;" width="20" height="20" viewBox="0 0 20 20"><g stroke="#d4d4d4" stroke-width="2.3"><path d="M10 2.4v15.6M3.4 6.3l13.2 7.6M3.4 13.9l13.2-7.6"/></g></svg>
<div class="t mono" style="left:970.5px;top:814.62px;font-size:26.85px;color:#858585;">31</div>
<div class="t mono" style="left:1054.5px;top:814.62px;font-size:26.85px;color:#d4d4d4;">/native/plugins/zego_express_engine</div>
<svg style="left:1615.35px;top:816.4px;" width="20" height="20" viewBox="0 0 20 20"><g stroke="#d4d4d4" stroke-width="2.3"><path d="M10 2.4v15.6M3.4 6.3l13.2 7.6M3.4 13.9l13.2-7.6"/></g></svg>
<div class="t mono" style="left:970.5px;top:854.62px;font-size:26.85px;color:#c6c6c6;">32</div>
<div class="a" style="left:1012px;top:566px;width:6px;height:320px;background:#487e02;"></div>
<div class="a" style="left:1054px;top:846px;width:4px;height:40px;background:#aeafad;"></div>
<div class="a" style="left:914px;top:246px;width:884px;height:8px;background:linear-gradient(#000 0%, rgba(0,0,0,0) 100%);opacity:.6"></div>
<div class="a" style="left:1798px;top:342px;width:110px;height:112px;background:rgba(121,121,121,0.2);"></div>
<div class="a" style="left:1806px;top:252px;width:56px;height:4px;background:#4b6a3e;"></div>
<div class="a" style="left:1806px;top:258px;width:2px;height:4px;background:#4b6a3e;"></div>
<div class="a" style="left:1810px;top:258px;width:10px;height:4px;background:#4b6a3e;"></div>
<div class="a" style="left:1822px;top:258px;width:14px;height:4px;background:#4b6a3e;"></div>
<div class="a" style="left:1838px;top:258px;width:4px;height:4px;background:#4b6a3e;"></div>
<div class="a" style="left:1844px;top:258px;width:14px;height:4px;background:#4b6a3e;"></div>
<div class="a" style="left:1806px;top:264px;width:56px;height:4px;background:#4b6a3e;"></div>
<div class="a" style="left:1806px;top:270px;width:16px;height:4px;background:#7a7a7a;"></div>
<div class="a" style="left:1806px;top:276px;width:10px;height:4px;background:#7a7a7a;"></div>
<div class="a" style="left:1806px;top:282px;width:12px;height:4px;background:#7a7a7a;"></div>
<div class="a" style="left:1806px;top:288px;width:12px;height:4px;background:#7a7a7a;"></div>
<div class="a" style="left:1806px;top:294px;width:18px;height:4px;background:#7a7a7a;"></div>
<div class="a" style="left:1806px;top:300px;width:12px;height:4px;background:#7a7a7a;"></div>
<div class="a" style="left:1806px;top:306px;width:54px;height:4px;background:#4b6a3e;"></div>
<div class="a" style="left:1806px;top:312px;width:2px;height:4px;background:#4b6a3e;"></div>
<div class="a" style="left:1810px;top:312px;width:6px;height:4px;background:#4b6a3e;"></div>
<div class="a" style="left:1806px;top:318px;width:54px;height:4px;background:#4b6a3e;"></div>
<div class="a" style="left:1806px;top:324px;width:26px;height:4px;background:#7a7a7a;"></div>
<div class="a" style="left:1806px;top:336px;width:54px;height:4px;background:#4b6a3e;"></div>
<div class="a" style="left:1806px;top:342px;width:2px;height:4px;background:#4b6a3e;"></div>
<div class="a" style="left:1810px;top:342px;width:12px;height:4px;background:#4b6a3e;"></div>
<div class="a" style="left:1806px;top:348px;width:54px;height:4px;background:#4b6a3e;"></div>
<div class="a" style="left:1806px;top:354px;width:16px;height:4px;background:#7a7a7a;"></div>
<div class="a" style="left:1806px;top:366px;width:54px;height:4px;background:#4b6a3e;"></div>
<div class="a" style="left:1806px;top:372px;width:2px;height:4px;background:#4b6a3e;"></div>
<div class="a" style="left:1810px;top:372px;width:16px;height:4px;background:#4b6a3e;"></div>
<div class="a" style="left:1806px;top:378px;width:54px;height:4px;background:#4b6a3e;"></div>
<div class="a" style="left:1806px;top:384px;width:12px;height:4px;background:#7a7a7a;"></div>
<div class="a" style="left:1806px;top:396px;width:54px;height:4px;background:#4b6a3e;"></div>
<div class="a" style="left:1806px;top:402px;width:2px;height:4px;background:#4b6a3e;"></div>
<div class="a" style="left:1810px;top:402px;width:8px;height:4px;background:#4b6a3e;"></div>
<div class="a" style="left:1820px;top:402px;width:6px;height:4px;background:#4b6a3e;"></div>
<div class="a" style="left:1806px;top:408px;width:54px;height:4px;background:#4b6a3e;"></div>
<div class="a" style="left:1806px;top:414px;width:56px;height:4px;background:#7a7a7a;"></div>
<div class="a" style="left:1806px;top:420px;width:86px;height:4px;background:#7a7a7a;"></div>
<div class="a" style="left:1806px;top:426px;width:72px;height:4px;background:#7a7a7a;"></div>
<div class="a" style="left:1806px;top:432px;width:102px;height:6px;background:#2d4b63;"></div>
<div class="a" style="left:1800px;top:390px;width:2px;height:48px;background:#4f8a0a;"></div>
<div class="a" style="left:1908px;top:246px;width:1px;height:752px;background:#3a3a3a;"></div>
<div class="a" style="left:1908px;top:246px;width:28px;height:1px;background:#3a3a3a;"></div>
<div class="a" style="left:1909px;top:488px;width:27px;height:282px;background:rgba(121,121,121,0.4);"></div>
<div class="a" style="left:1909px;top:607px;width:9px;height:121px;background:#4a6a35;"></div>
<div class="a" style="left:1909px;top:712px;width:27px;height:3px;background:#a0a0a0;"></div>
<svg style="left:130px;top:1004px;" width="32" height="32" viewBox="0 0 32 32"><path d="M7.8 12l8.2 7.5-8.2 8M23.9 4.6l-7.4 7.1 7.4 7.2" fill="none" stroke="#ffffff" stroke-width="1.7"/></svg>
<svg style="left:196px;top:1002px;" width="28" height="34" viewBox="0 0 28 34"><g fill="none" stroke="#ffffff" stroke-width="1.75"><circle cx="8.2" cy="8.2" r="3.6"/><circle cx="8.2" cy="27.2" r="3.6"/><circle cx="19.9" cy="13.5" r="3.6"/><path d="M8.2 11.8v11.8M19.9 17.1c0 3.5-2 4.4-5.6 4.8-3.2.3-5.6 1-6.1 3.7"/></g></svg>
<div class="t" style="left:230px;top:1008.68px;font-size:24.6px;color:#ffffff;letter-spacing:0.3px;">main*</div>
<svg style="left:322px;top:1002px;" width="36" height="36" viewBox="0 0 36 36"><g fill="none" stroke="#ffffff" stroke-width="1.9"><path d="M18.2 24.2H14.3A5.2 5.2 0 0 1 14.4 13.9A6.6 6.6 0 0 1 26.1 13.9A5.16 5.16 0 0 1 26.4 24.2H24.4"/><path d="M21 28.4V17.3M17.6 20.4l3.4-3.5 3.4 3.5"/></g></svg>
<svg style="left:386px;top:1004px;" width="32" height="32" viewBox="0 0 32 32"><g fill="none" stroke="#ffffff" stroke-width="1.8"><circle cx="8.4" cy="7.9" r="3.4"/><circle cx="8.4" cy="24.25" r="3.4"/><circle cx="22.4" cy="15.1" r="3.4"/><path d="M8.4 11.3v9.6M15.3 4.1v24.7M22.4 18.5v3a3.1 3.1 0 0 1-3.1 3.1h-6"/></g></svg>
<svg style="left:446px;top:1004px;" width="32" height="32" viewBox="0 0 32 32"><g fill="none" stroke="#ffffff" stroke-width="1.9"><circle cx="15.7" cy="15.9" r="11.3"/><path d="M11 11.2l9.4 9.4M20.4 11.2L11 20.6"/></g></svg>
<div class="t" style="left:484.3px;top:1008.88px;font-size:24.6px;color:#ffffff;">0</div>
<svg style="left:504px;top:1004px;" width="32" height="32" viewBox="0 0 32 32"><path d="M14.7 5.2L3.8 25.1h21.8z" fill="none" stroke="#ffffff" stroke-width="1.9" stroke-linejoin="round"/><path d="M14.7 11.5v7.5M14.7 21v2.4" stroke="#ffffff" stroke-width="2.3"/></svg>
<div class="t" style="left:540.6px;top:1008.88px;font-size:24.6px;color:#ffffff;">0</div>
<div class="t" style="left:587.5px;top:1008.68px;font-size:24.6px;color:#ffffff;letter-spacing:0.3px;">Git Graph</div>
<div class="t" style="left:1240px;top:1008.98px;font-size:24.6px;color:#ffffff;letter-spacing:0.1px;">Ln 32, Col 1</div>
<div class="t" style="left:1405.6px;top:1008.98px;font-size:24.6px;color:#ffffff;letter-spacing:0.1px;">Spaces: 4</div>
<div class="t" style="left:1549.2px;top:1008.98px;font-size:24.6px;color:#ffffff;letter-spacing:0.5px;">UTF-8</div>
<div class="t" style="left:1654.8px;top:1008.98px;font-size:24.6px;color:#ffffff;">LF</div>
<div class="t" style="left:1713.5px;top:1008.98px;font-size:24.6px;color:#ffffff;letter-spacing:0.3px;">Ignore</div>
<svg style="left:1816px;top:1004px;" width="32" height="32" viewBox="0 0 32 32"><g fill="none" stroke="#ffffff" stroke-width="1.8"><circle cx="11.9" cy="15.2" r="4.3"/><path d="M4.2 28a7.8 7.5 0 0 1 15.6 0M10.6 8.2V4.6h17.2v10.6h-4l-2.9 3.4v-3.4h-1.6"/></g></svg>
<svg style="left:1876px;top:1004px;" width="32" height="32" viewBox="0 0 32 32"><g fill="none" stroke="#ffffff" stroke-width="1.8"><path d="M20 6A8.6 8.6 0 0 0 7.8 12.6c-.3 2.2-.2 4.5-.2 6.6"/><path d="M24.2 13.1c.1 2.2.2 4.3.6 6.1l.9 4.5H13.6"/><path d="M13.3 23.9a2.7 3.1 0 0 0 5.4 0"/><path d="M4.5 27.5L28.7 3.4"/></g></svg>
</div>
<div class="a" style="left:112px;top:76px;width:1824px;height:966px;border-radius:20px;border:2px solid rgba(255,255,255,0.22)"></div>
</body></html>
